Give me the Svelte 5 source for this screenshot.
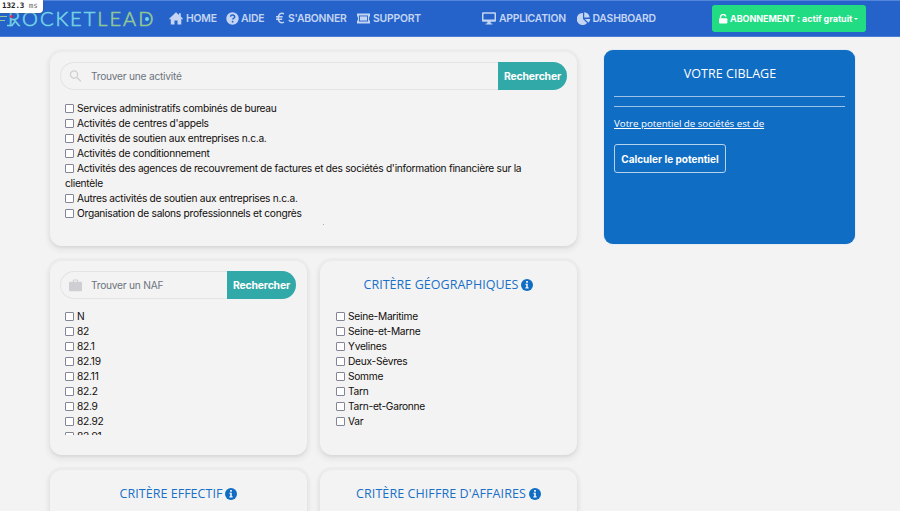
<script>
  const activities = [
    "Services administratifs combinés de bureau",
    "Activités de centres d'appels",
    "Activités de soutien aux entreprises n.c.a.",
    "Activités de conditionnement",
    "Activités des agences de recouvrement de factures et des sociétés d'information financière sur la clientèle",
    "Autres activités de soutien aux entreprises n.c.a.",
    "Organisation de salons professionnels et congrès",
  ];
  const nafCodes = ["N", "82", "82.1", "82.19", "82.11", "82.2", "82.9", "82.92", "82.91"];
  const places = ["Seine-Maritime", "Seine-et-Marne", "Yvelines", "Deux-Sèvres", "Somme", "Tarn", "Tarn-et-Garonne", "Var"];
</script>

{#snippet info()}
  <svg class="info" viewBox="0 0 12 12"><circle cx="6" cy="6" r="6" fill="#0f6dc4" /><path d="M5.1 2.1h1.8v1.6H5.1zM4.5 4.7h2.3v3.5h.8v1.2H4.4V8.2h.8V5.9h-.7z" fill="#f3f3f3" /></svg>
{/snippet}

{#snippet checks(items)}
  {#each items as item}
    <label class="check"><span class="box"></span>{item}</label>
  {/each}
{/snippet}

<header>
  <div class="logo">
    <svg class="wing" viewBox="0 0 22 18"><path d="M0 5.500h7M0 9.500h5" stroke="#93c894" stroke-width="1.200" /><path d="M7 14.500h5l3-4" fill="none" stroke="#75d3e3" stroke-width="1.500" /></svg>
    <span class="rocket">ROCKET</span><span class="lead">LEAD</span>
    <i class="red"></i><i class="dot"></i>
  </div>
  <nav>
    <a class="home" href="#home"><svg width="14" height="13" viewBox="0 0 14 13"><path d="M7 .3 10 3V1.2h1.8v3.4L14 6.7l-.8.9-.9-.5v5.3H8.5V8.5h-3v3.9H1.8V7.1l-1 .5-.7-.9z" /></svg><span>HOME</span></a>
    <a class="aide" href="#aide"><svg width="13" height="13" viewBox="0 0 13 13"><circle cx="6.5" cy="6.5" r="6.2" /><path d="M4.5 4.8c.2-2.5 4.4-2.2 4.2.1-.1 1.5-2.1 1.3-2.1 2.7" fill="none" stroke="#2563cb" stroke-width="1.5" /><circle cx="6.6" cy="9.7" r=".9" fill="#2563cb" /></svg><span>AIDE</span></a>
    <a class="abonner" href="#abonner"><svg width="9" height="12" viewBox="0 0 9 12"><path d="M8 1.8C4.8.2 2.2 2 2.2 6s2.6 5.8 5.8 4.2M0 4.8h6.7M0 7.2h6.2" fill="none" stroke="#c4d5f3" stroke-width="1.5" /></svg><span>S'ABONNER</span></a>
    <a class="support" href="#support"><svg width="15" height="11" viewBox="0 0 15 11"><path fill-rule="evenodd" d="M1 .5h13V3q-1 .5-1 2.5t1 2.5v2.500H1V8q1-.5 1-2.500T1 3zM3 2.500v6h9v-6z" /><rect x="3.9" y="3.4" width="7.2" height="4.2" /></svg><span>SUPPORT</span></a>
    <a class="application" href="#application"><svg width="14" height="13" viewBox="0 0 14 13"><path fill-rule="evenodd" d="M1 .3h12q1 0 1 1v7.500q0 1-1 1H8.500l.4 1.600h1.500v1.200H3.600v-1.200h1.500l.4-1.600H1q-1 0-1-1V1.300q0-1 1-1zM1.500 1.800v5.700h11V1.800z" /></svg><span>APPLICATION</span></a>
    <a class="dashboard" href="#dashboard"><svg width="14" height="13" viewBox="0 0 14 13"><path d="M6 1v5.900l4.100 4.100A6 6 0 1 1 6 1zM7.200.2A5.600 5.600 0 0 1 12.600 5.600H7.200zM7.800 6.900h5.500a6 6 0 0 1-1.800 3.800z" /></svg><span>DASHBOARD</span></a>
  </nav>
  <button class="plan"><svg width="9" height="10" viewBox="0 0 9 10"><path d="M1.500 4.500V3a2.700 2.700 0 0 1 5.300-.5" fill="none" stroke="#fff" stroke-width="1.400" /><rect y="4.200" width="8.400" height="5.400" rx="1" fill="#fff" /></svg><span>ABONNEMENT : actif gratuit</span><b></b></button>
</header>
<div class="timing"><b>132.3</b> ms</div>

<main>
  <div class="criteria">
    <section class="card wide">
      <div class="search">
        <svg width="12" height="12" viewBox="0 0 12 12"><circle cx="4.500" cy="4.500" r="3.600" fill="none" stroke="#cfcfd1" stroke-width="1.200" /><path d="m7.200 7.200 4 4" stroke="#cfcfd1" stroke-width="1.400" /></svg>
        <span class="ph">Trouver une activité</span><button>Rechercher</button>
      </div>
      <div class="list">{@render checks(activities)}</div>
      <i class="speck"></i>
    </section>
    <section class="card">
      <div class="search">
        <svg width="13" height="13" viewBox="0 0 13 13"><path d="M4.300 3V1h4.400v2" fill="none" stroke="#cfcfd3" /><rect y="2.800" width="13" height="9.400" rx="1" fill="#cfcfd3" /></svg>
        <span class="ph">Trouver un NAF</span><button>Rechercher</button>
      </div>
      <div class="list">{@render checks(nafCodes)}</div>
    </section>
    <section class="card">
      <h2><span>CRITÈRE GÉOGRAPHIQUES</span>{@render info()}</h2>
      <div class="list places">{@render checks(places)}</div>
    </section>
    <section class="card"><h2><span>CRITÈRE EFFECTIF</span>{@render info()}</h2></section>
    <section class="card"><h2 class="turnover"><span>CRITÈRE CHIFFRE D'AFFAIRES</span>{@render info()}</h2></section>
  </div>
  <aside>
    <h2>VOTRE CIBLAGE</h2>
    <hr /><hr />
    <p>Votre potentiel de sociétés est de</p>
    <button>Calculer le potentiel</button>
  </aside>
</main>

<style>
  :global(body) { margin: 0; background: #f3f3f3; }
  :global(#app) { height: 511px; overflow: hidden; position: relative; font-family: Inter, "Liberation Sans", sans-serif; }
  * { box-sizing: border-box; }
  button { font-family: inherit; border: 0; padding: 0; white-space: nowrap; }
  header { height: 37px; background: #2563cb; border-top: 1px solid #5385d8; border-bottom: 1px solid #4d80d5; display: flex; align-items: center; }
  .logo { width: 169px; height: 35px; flex: none; display: flex; align-items: center; position: relative; padding-left: 8px; font: 300 20px/35px Lato, sans-serif; letter-spacing: 2px; -webkit-text-stroke: .6px; }
  .wing { position: absolute; left: 0; top: 10px; width: 22px; height: 18px; }
  .rocket { color: #75d3e3; }
  .lead { color: #93c894; }
  .red { position: absolute; left: 10px; top: 14px; width: 3px; height: 3px; background: #e02744; border-radius: 50%; }
  .dot { position: absolute; left: 145px; top: 16px; width: 4px; height: 4px; background: #75d3e3; border-radius: 50%; }
  nav { display: flex; align-items: center; width: 543px; flex: none; }
  nav a { display: flex; align-items: center; flex: none; color: #c4d5f3; fill: #c4d5f3; text-decoration: none; font-weight: 600; font-size: 10.400px; letter-spacing: -.22px; white-space: nowrap; }
  nav svg { flex: none; margin-top: -1px; }
  .home { width: 57px; gap: 3px; }
  .aide { width: 50px; gap: 2px; }
  .abonner { width: 80px; gap: 3px; }
  .support { width: 125px; gap: 2px; }
  .application { width: 94.500px; gap: 3px; margin-left: 1px; }
  .dashboard { gap: 2px; }
  .plan { width: 154px; height: 27px; border-radius: 3px; background: #22dc83; color: #fff; display: flex; align-items: center; padding-left: 7px; font-weight: 700; font-size: 9px; letter-spacing: -.06px; gap: 2px; }
  .plan b { border: 2.500px solid transparent; border-top-color: #fff; margin: 2px 0 0 0; }
  .timing { position: absolute; left: 0; top: 0; width: 43px; height: 13px; background: #fff; border-radius: 0 0 4px 0; box-shadow: 0 0 2px #555; font: 7.500px/12px "DejaVu Sans Mono", monospace; color: #666; padding-left: 2px; white-space: nowrap; letter-spacing: -.05px; }
  .timing b { color: #222; }
  main { display: flex; align-items: flex-start; padding: 13px 45px 0 50px; gap: 27px; }
  .criteria { width: 527px; flex: none; display: grid; grid-template-columns: 257px 257px; column-gap: 13px; row-gap: 15.500px; margin-top: 2px; grid-auto-rows: 193.500px; }
  .card { border-radius: 12px; background: #f3f3f3; padding: 10px 11px 10px 10px; box-shadow: 0 2px 3px #d8d8d8, 0 0 0 3px #ececec, 0 3px 3px 4px #ededed; min-width: 0; position: relative; }
  .wide { grid-column: 1 / 3; padding: 10px; }
  .search { height: 28px; border: 1px solid #e3e3e3; border-right: 0; border-radius: 14px; display: flex; align-items: center; padding-left: 8px; }
  .search svg { flex: none; width: 13px; margin-right: 9px; }
  .ph { font-size: 10.200px; letter-spacing: -.24px; color: #6d747d; white-space: nowrap; }
  .search button { width: 69px; height: 28px; margin-left: auto; flex: none; background: #31a9a8; color: #fff; border-radius: 0 14px 14px 0; font-weight: 700; font-size: 10.400px; letter-spacing: -.15px; }
  .list { margin: 10px 0 0 5px; height: 126px; overflow: hidden; width: 480px; max-width: 100%; }
  .wide .list { margin-top: 11px; }
  .list.places { margin-left: 6px; }
  .check { display: block; font-size: 10.200px; letter-spacing: -.27px; line-height: 15px; color: #110d0b; }
  .box { display: inline-block; width: 9px; height: 9px; border: 1px solid #85859a; border-radius: 1px; background: #fff; margin-right: 3px; vertical-align: -1px; }
  .speck { position: absolute; left: 273px; top: 172px; width: 1px; height: 1px; background: #aaa; }
  h2 { margin: 0; font: 400 12.500px/28px "Open Sans", sans-serif; color: #1870c8; display: flex; justify-content: center; align-items: center; gap: 3px; white-space: nowrap; letter-spacing: .04px; padding-left: 1px; }
  .turnover { letter-spacing: .08px; }
  .info { width: 12px; height: 12px; }
  aside { width: 251px; height: 194px; border-radius: 9px; background: #0f6dc4; color: #fff; padding: 10px 10px; flex: none; box-shadow: 0 0 1px #76a8db; }
  aside h2 { color: #fff; height: 27px; }
  hr { border: 0; height: 1px; background: #9cc3e7; margin: 9px 0 0; }
  p { margin: 9px 0 13px; font: 9.800px/15px "Open Sans", sans-serif; letter-spacing: -.05px; text-decoration: underline; text-decoration-thickness: 1px; text-underline-offset: 1px; }
  aside button { width: 112px; height: 29px; border: 1px solid #b6d3ed; border-radius: 3px; color: #fff; background: transparent; font-weight: 700; font-size: 10px; }
</style>
